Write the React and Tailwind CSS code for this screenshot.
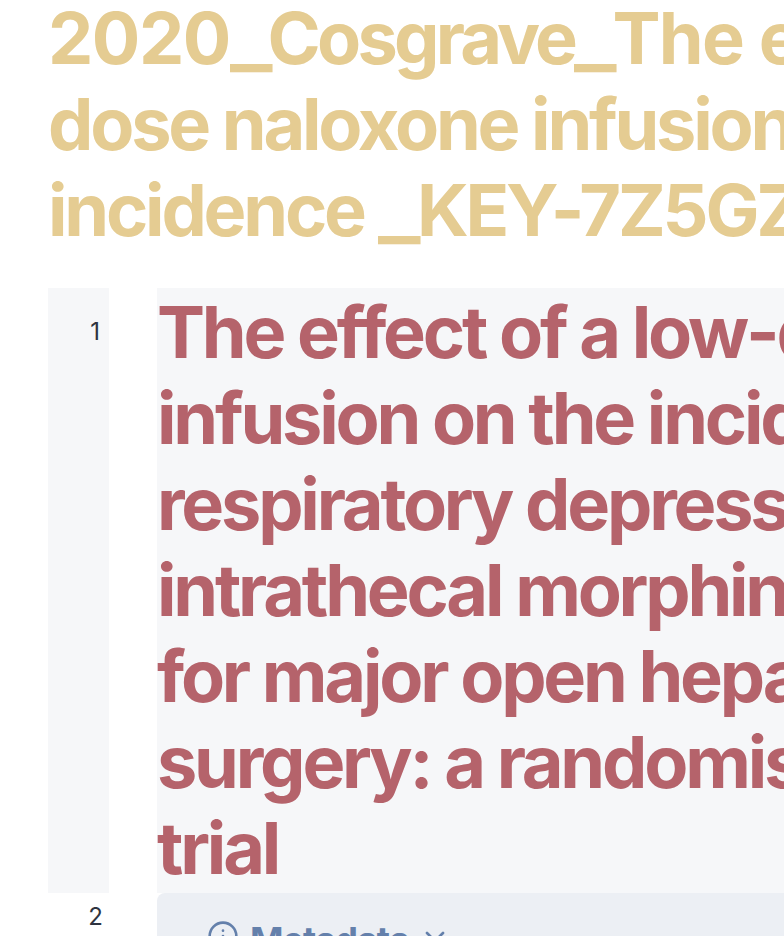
import { Info, ChevronDown } from 'lucide-react';

const docTitle = [
  'The effect of a low-dose naloxone',
  'infusion on the incidence of',
  'respiratory depression after',
  'intrathecal morphine administration',
  'for major open hepatobiliary',
  'surgery: a randomised controlled',
  'trial',
];

function Underscore({ className }) {
  return <span className={`inline-block origin-left scale-x-[1.24] ${className}`}>_</span>;
}

export default function App() {
  return (
    <div className="h-[936px] w-[784px] overflow-hidden bg-white font-['Inter',sans-serif]">
      <div className="w-[1400px] pl-12">
        <h1 className="-mt-[5px] pb-[35px] text-[72px] leading-[86px] font-bold tracking-[-3.2px] whitespace-nowrap text-[#e5cc92]">
          <div>
            <span className="tracking-[-1.5px]">2020</span>
            <Underscore className="tracking-[3.5px]" />
            <span className="tracking-[-3.8px]">Cosgrave</span>
            <Underscore className="tracking-[4px]" />
            <span className="tracking-[-1.6px]">The effect of a low-</span>
          </div>
          <div>dose naloxone infusion on the</div>
          <div>
            incidence <Underscore className="tracking-[5px]" />KEY-7Z5GZ2QK
          </div>
        </h1>

        <div className="flex">
          <div className="flex w-[61px] flex-none justify-end bg-[#f6f7f9] pt-[32px] pr-[9px] text-2xl leading-6 text-[#2e3440]">1</div>
          <div className="ml-12 flex h-[605px] flex-1 bg-[#f6f7f9]">
            <h2 className="mt-[1px] text-[72px] leading-[86px] font-bold tracking-[-3.2px] whitespace-nowrap text-[#b5636b]">
              {docTitle.map(line => (
                <div key={line}>{line}</div>
              ))}
            </h2>
          </div>
        </div>

        <div className="flex">
          <div className="flex w-[61px] flex-none justify-end pt-3 pr-[6px] text-2xl leading-6 text-[#2e3440]">2</div>
          <div className="ml-12 flex h-[60px] flex-1 items-start gap-[11px] rounded-t-lg bg-[#eceff4] pt-[27px] pl-[50px]">
            <Info className="h-8 w-8 flex-none text-[#6480ab]" strokeWidth={2} />
            <span className="text-[36px] leading-10 font-bold tracking-[-1px] text-[#6480ab]">Metadata</span>
            <ChevronDown className="mt-[1px] -ml-[1px] h-8 w-8 flex-none text-[#6480ab]" strokeWidth={2} />
          </div>
        </div>
      </div>
    </div>
  );
}
